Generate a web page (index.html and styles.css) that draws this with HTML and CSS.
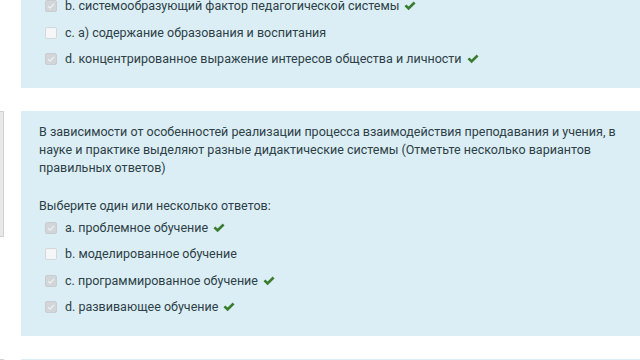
FILE: index.html
```html
<!DOCTYPE html>
<html lang="ru">
<head>
    <meta charset="UTF-8">
    <meta name="viewport" content="width=device-width, initial-scale=1.0">
    <title>Тест</title>
    <link rel="stylesheet" href="styles.css">
</head>
<body>
    <div class="page">
        <!-- previous question, only the tail is visible -->
        <div class="que que-prev">
            <div class="info info-empty"></div>
            <div class="formulation">
                <ul class="answers">
                    <li class="checked"><span class="box"></span><span class="label">b. системообразующий фактор педагогической системы</span><span class="tick"></span></li>
                    <li><span class="box"></span><span class="label">c. а) содержание образования и воспитания</span></li>
                    <li class="checked"><span class="box"></span><span class="label">d. концентрированное выражение интересов общества и личности</span><span class="tick"></span></li>
                </ul>
            </div>
        </div>

        <div class="que">
            <div class="info"></div>
            <div class="formulation">
                <p class="qtext">В зависимости от особенностей реализации процесса взаимодействия преподавания и учения, в науке и практике выделяют разные дидактические системы (Отметьте несколько вариантов правильных ответов)</p>
                <p class="prompt">Выберите один или несколько ответов:</p>
                <ul class="answers">
                    <li class="checked"><span class="box"></span><span class="label">a. проблемное обучение</span><span class="tick"></span></li>
                    <li><span class="box"></span><span class="label">b. моделированное обучение</span></li>
                    <li class="checked"><span class="box"></span><span class="label">c. программированное обучение</span><span class="tick"></span></li>
                    <li class="checked"><span class="box"></span><span class="label">d. развивающее обучение</span><span class="tick"></span></li>
                </ul>
            </div>
        </div>

        <div class="que">
            <div class="info"></div>
            <div class="formulation formulation-next"></div>
        </div>
    </div>
</body>
</html>
```

FILE: styles.css
```css
:root {
    --box-bg: #dbeef5;
    --text-color: #2d3f47;
    --tick-color: #3a7d2f;
    --border-radius: 2px;
}

* {
    margin: 0;
    padding: 0;
    box-sizing: border-box;
}

body {
    font-family: Roboto, 'Liberation Sans', sans-serif;
    font-size: 12.5px;
    line-height: 18px;
    color: var(--text-color);
    background-color: #ffffff;
    overflow: hidden;
}

.page {
    width: 660px;
    margin-top: -23px;
}

.que {
    display: flex;
    align-items: flex-start;
    gap: 17px;
    margin-bottom: 22.5px;
}

.info {
    width: 4px;
    height: 126px;
    background-color: #e6e8e9;
    border: 1px solid #cfd3d5;
    border-left: none;
}

.info-empty {
    height: 0;
    visibility: hidden;
}

.formulation {
    flex: 1;
    background-color: var(--box-bg);
    padding: 12px 18px 16px;
}

.que-prev .formulation {
    padding-top: 16px;
}

.formulation-next {
    height: 60px;
}

.qtext {
    margin-bottom: 20px;
}

.answers {
    list-style: none;
    padding-left: 6px;
}

.answers li {
    display: flex;
    align-items: center;
    height: 26.4px;
    white-space: nowrap;
}

.box {
    width: 12px;
    height: 12px;
    margin-right: 8px;
    border: 1px solid #d3d7da;
    border-radius: var(--border-radius);
    background-color: #f4f6f7;
    flex-shrink: 0;
}

.checked .box {
    background-color: #d2d6d9;
    border-color: #c8cdd0;
    background-image: url("data:image/svg+xml,%3Csvg xmlns='http://www.w3.org/2000/svg' viewBox='0 0 12 12'%3E%3Cpath d='M2.5 6.2 L5 8.5 L9.5 3.5' fill='none' stroke='%23eef0f1' stroke-width='1.6'/%3E%3C/svg%3E");
}

.tick {
    width: 12px;
    height: 10px;
    margin-left: 5px;
    background-image: url("data:image/svg+xml,%3Csvg xmlns='http://www.w3.org/2000/svg' viewBox='0 0 12 10'%3E%3Cpath d='M0.5 5.2 L2.3 3.4 L4.6 5.6 L9.7 0.6 L11.5 2.4 L4.6 9.2 Z' fill='%233a7d2f'/%3E%3C/svg%3E");
    background-repeat: no-repeat;
}
```
